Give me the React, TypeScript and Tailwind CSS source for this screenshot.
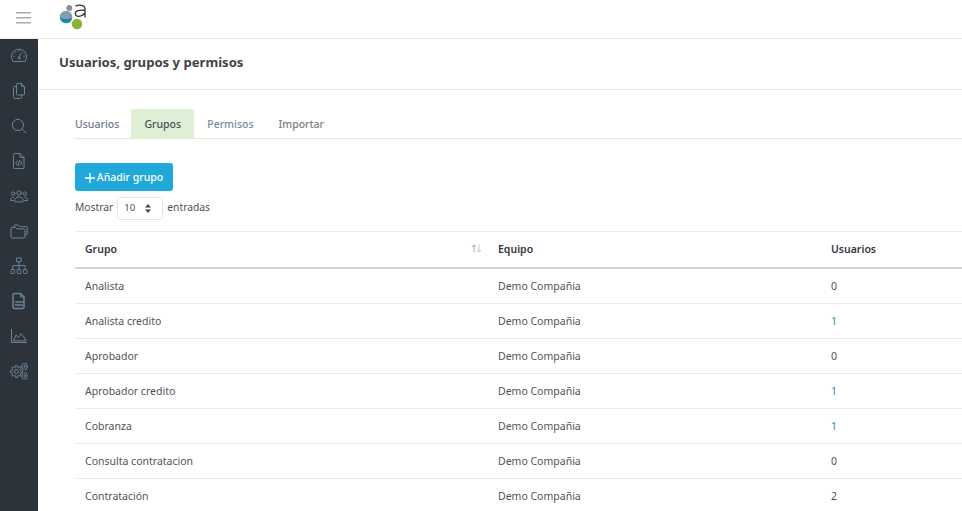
import { ReactNode } from "react";

const font = "font-['Noto_Sans',sans-serif]";

const groups = [
  { name: "Analista", users: "0", link: false },
  { name: "Analista credito", users: "1", link: true },
  { name: "Aprobador", users: "0", link: false },
  { name: "Aprobador credito", users: "1", link: true },
  { name: "Cobranza", users: "1", link: true },
  { name: "Consulta contratacion", users: "0", link: false },
  { name: "Contratación", users: "2", link: false },
];

// toothed outline for the settings icon
const gearPath = (cx: number, cy: number, outer: number, inner: number, teeth: number) => {
  const pts: string[] = [];
  const step = (Math.PI * 2) / teeth;
  for (let i = 0; i < teeth; i++) {
    const a = i * step;
    [
      [inner, a - step * 0.32],
      [outer, a - step * 0.18],
      [outer, a + step * 0.18],
      [inner, a + step * 0.32],
    ].forEach(([r, t]) => {
      pts.push(`${(cx + r * Math.cos(t)).toFixed(2)} ${(cy + r * Math.sin(t)).toFixed(2)}`);
    });
  }
  return `M${pts.join("L")}Z`;
};

// icons are two-tone in the picture: grey-blue body with a brighter blue edge
const Icon = ({ children }: { children: ReactNode }) => (
  <div className="flex h-[35px] items-center justify-center">
    <svg
      width="18"
      height="18"
      viewBox="0 0 18 18"
      fill="none"
      stroke="#688499"
      strokeWidth="1"
      strokeLinecap="round"
      strokeLinejoin="round"
      className="-mt-[2px]"
    >
      {children}
    </svg>
  </div>
);

const Sidebar = () => (
  <aside className="flex w-[38px] shrink-0 flex-col bg-[#2d333b]">
    <Icon>
      <path d="M2.8 14.2A7.6 7.6 0 1 1 15.2 14.2Z" />
      <path d="M9 10.5 10.8 6.5" />
      <circle cx="9" cy="11" r="1" />
      <path d="M3.6 9.2h.8M14.4 9.2h-.8M5.5 5.3l.5.5M12.5 5.3l-.5.5M9 3.6v.8" />
    </Icon>
    <Icon>
      <path d="M7.5 1.5h4L14.5 4.5V12a1 1 0 0 1-1 1h-6a1 1 0 0 1-1-1V2.5a1 1 0 0 1 1-1Z" />
      <path d="M11.5 1.5v3h3" />
      <path d="M6.5 4.5H4.5a1 1 0 0 0-1 1V15.5a1 1 0 0 0 1 1h6a1 1 0 0 0 1-1V13" />
    </Icon>
    <Icon>
      <circle cx="8" cy="8" r="5.6" />
      <path d="M12.2 12.2 16 16" />
    </Icon>
    <Icon>
      <path d="M4.5 1.5h5.5L14 5.5V15.5a1 1 0 0 1-1 1H4.5a1 1 0 0 1-1-1v-13a1 1 0 0 1 1-1Z" />
      <path d="M10 1.5v4h4" />
      <path d="M7 9 5.7 11 7 13M10.6 9l1.3 2-1.3 2M9.5 8.5 8.1 13.5" />
    </Icon>
    <Icon>
      <circle cx="9" cy="6" r="2.2" />
      <circle cx="3.2" cy="6.6" r="1.7" />
      <circle cx="14.8" cy="6.6" r="1.7" />
      <path d="M5 14.5v-1.8c0-1.6 1.5-2.7 4-2.7s4 1.1 4 2.7v1.8Z" />
      <path d="M3.5 10.2C1.8 10.4.6 11.2.6 12.6v1h3M14.5 10.2c1.7.2 2.9 1 2.9 2.4v1h-3" />
    </Icon>
    <Icon>
      <path d="M4 5.5V3.6a.6.6 0 0 1 .6-.6h3.6l1.4 1.6h7a.6.6 0 0 1 .6.6V12a.6.6 0 0 1-.6.6H15" />
      <path d="M1 6.5a1 1 0 0 1 1-1h3.6l1.4 1.4h7a1 1 0 0 1 1 1V15a1 1 0 0 1-1 1H2a1 1 0 0 1-1-1Z" />
    </Icon>
    <Icon>
      <rect x="6.8" y="1" width="4.4" height="3.6" />
      <rect x="1" y="12.5" width="3.6" height="4" rx="0.8" />
      <rect x="7.2" y="12.5" width="3.6" height="4" rx="0.8" />
      <rect x="13.4" y="12.5" width="3.6" height="4" rx="0.8" />
      <path d="M9 4.6v7.9M2.8 12.5V8.6h12.4v3.9" />
    </Icon>
    <Icon>
      <path d="M4.5 1.5h6L14 5V15a1.5 1.5 0 0 1-1.5 1.5h-8A1.5 1.5 0 0 1 3 15V3a1.5 1.5 0 0 1 1.5-1.5Z" strokeWidth="1.5" />
      <path d="M10.5 1.5V5H14" />
      <path d="M5.5 10h7M5.5 13h7" strokeWidth="1.6" />
    </Icon>
    <Icon>
      <path d="M1.5 2.5v13h15" />
      <path d="M3.5 13.5 6 8l2.5 2.5L11 6.5l3 3.5 1.8 3.5Z" />
    </Icon>
    <Icon>
      <path d={gearPath(6.5, 9.5, 6, 4.4, 8)} />
      <circle cx="6.5" cy="9.5" r="2" />
      <path d={gearPath(14.5, 4.5, 3.4, 2.5, 6)} />
      <path d={gearPath(14.5, 14, 3.4, 2.5, 6)} />
      <circle cx="14.5" cy="4.5" r="0.8" />
      <circle cx="14.5" cy="14" r="0.8" />
    </Icon>
  </aside>
);

export default function App() {
  return (
    <div className={`flex h-[511px] w-[962px] flex-col overflow-hidden bg-white ${font}`}>
      <header className="flex h-[39px] shrink-0 items-center border-b border-[#ececec]">
        <div className="flex w-[38px] pl-[16px]">
          <svg width="15" height="12" viewBox="0 0 15 12" className="-mt-[2px]" fill="#a3abb3">
            <rect x="0" y="0" width="15" height="1.5" />
            <rect x="0" y="5" width="15" height="1.5" />
            <rect x="0" y="10" width="15" height="1.5" />
          </svg>
        </div>
        <svg width="30" height="30" viewBox="0 0 30 30" className="ml-[21px] -mt-[2px]">
          <circle cx="10.3" cy="5" r="3" fill="#8f8f8f" />
          <circle cx="7" cy="14" r="6.3" fill="#7f9fb0" />
          <path d="M.8 14.5a6.3 6.3 0 0 0 12.5 0c-3.5 2-8.5 2-12.5 0Z" fill="#1f86ad" />
          <circle cx="18" cy="21" r="5.2" fill="#86b52f" />
          <path d="M16.5 3.2C20 1.4 26 1.8 26 6V14.5M26 7.5C20 6.5 16.3 8 16.3 10.8 16.3 14.5 23 14 26 10" fill="none" stroke="#333" strokeWidth="1.3" />
        </svg>
      </header>

      <div className="flex min-h-0 flex-1">
        <Sidebar />
        <main className="min-w-0 flex-1 overflow-hidden">
          <div className="flex h-[51px] items-center border-b border-[#ececec] pb-[2px] pl-[21px]">
            <h1 className="text-[13.1px] font-bold text-[#3f4349]">Usuarios, grupos y permisos</h1>
          </div>

          <div className="pl-[37px] pt-[19px]">
            <div className="flex h-[30px] border-b border-[#dcedd0] text-[10.5px] font-medium">
              <span className="flex items-center pr-[12px] pt-[2px] text-[#6c7a89]">Usuarios</span>
              <span className="flex w-[63px] items-center justify-center rounded-t-[3px] bg-[#dfefd5] pt-[2px] text-[#4a5058]">Grupos</span>
              <span className="flex items-center pl-[13px] pr-[12px] pt-[2px] text-[#7b8a9c]">Permisos</span>
              <span className="flex items-center px-[13px] pt-[2px] text-[#7c7f85]">Importar</span>
            </div>

            <button className="mt-[24px] flex h-[28px] w-[98px] items-center justify-center gap-[2px] rounded-[3px] bg-[#1fa8d8] pt-[1px] text-[10.5px] font-medium text-white">
              <svg width="10" height="10" viewBox="0 0 10 10" stroke="#fff" strokeWidth="1.4">
                <path d="M5 0v10M0 5h10" />
              </svg>
              Añadir grupo
            </button>

            <div className="mt-[6px] flex h-[23px] items-center text-[10.3px] text-[#4d5259]">
              <span className="-mt-[1px]">Mostrar</span>
              <span className="ml-[4px] flex h-[23px] w-[46px] items-center justify-between rounded-[3px] border border-[#e5e5e5] pl-[6px] pr-[11px] text-[9.5px]">
                10
                <svg width="6" height="9" viewBox="0 0 6 9" fill="#444">
                  <path d="M3 0 6 3.5H0ZM3 9 0 5.5H6Z" />
                </svg>
              </span>
              <span className="-mt-[1px] ml-[4px]">entradas</span>
            </div>

            <table className="mt-[11px] w-[925px] table-fixed border-t border-[#ececec] text-[10.5px] text-[#4f545c]">
              <thead>
                <tr className="h-[36px] border-b-2 border-[#d5d6dc] text-left text-[#33373d]">
                  <th className="relative w-[413px] pl-[10px] pt-[2px] font-semibold">
                    Grupo
                    <svg width="11" height="9" viewBox="0 0 11 9" fill="none" className="absolute right-[6px] top-[12px]">
                      <path d="M3 8.5V1M1 3l2-2.2L5 3" stroke="#8fb4c8" />
                      <path d="M8 .5V8M6 6l2 2.2L10 6" stroke="#c4c7cc" />
                    </svg>
                  </th>
                  <th className="w-[333px] pl-[10px] pt-[2px] font-semibold">Equipo</th>
                  <th className="pl-[10px] pt-[2px] font-semibold">Usuarios</th>
                </tr>
              </thead>
              <tbody>
                {groups.map((g) => (
                  <tr key={g.name} className="h-[35px] border-b border-[#ececec] first:h-[36px] [&:first-child>td]:pt-[2px]">
                    <td className="pl-[10px] pt-[1px]">{g.name}</td>
                    <td className="pl-[10px] pt-[1px]">Demo Compañia</td>
                    <td className={`pl-[10px] pt-[1px] ${g.link ? "text-[#2a8bc0]" : ""}`}>{g.users}</td>
                  </tr>
                ))}
              </tbody>
            </table>
          </div>
        </main>
      </div>
    </div>
  );
}
